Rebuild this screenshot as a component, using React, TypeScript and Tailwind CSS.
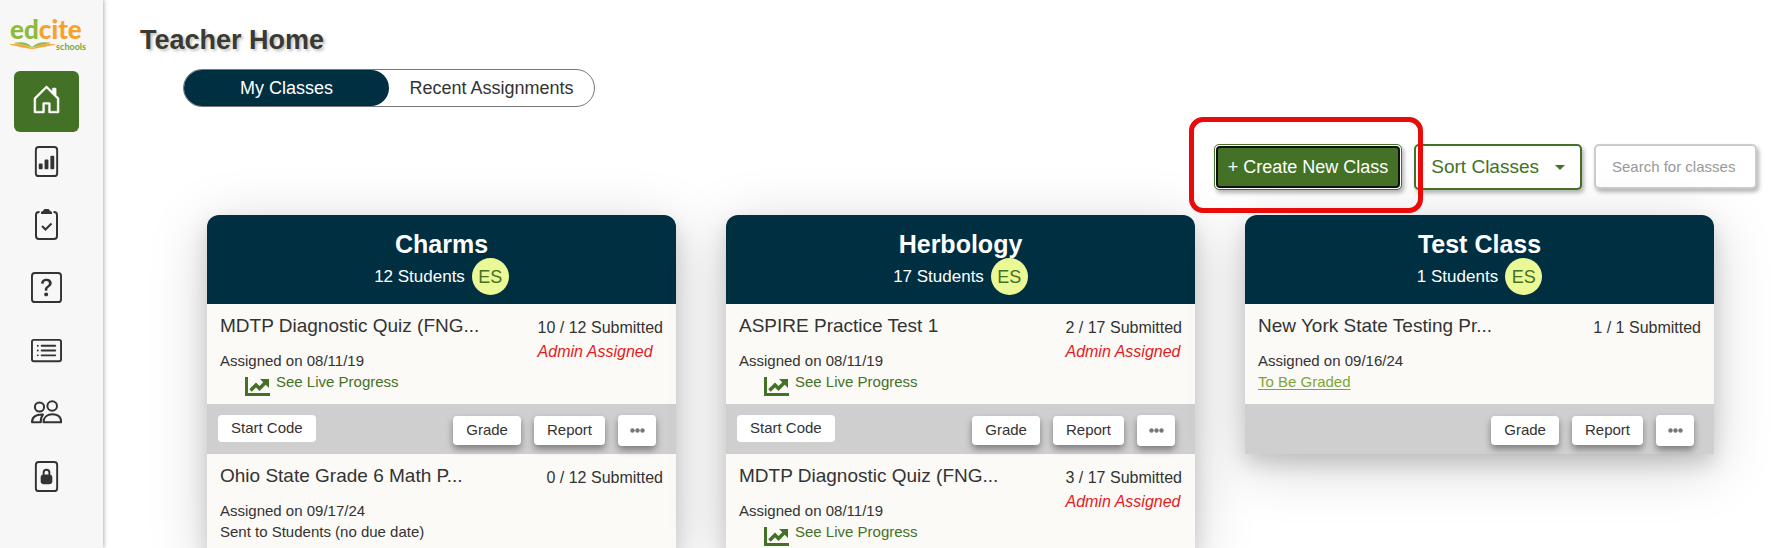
import { useState } from "react";
import { BsCardList, BsFileBarGraph, BsFileLock2, BsHouseDoor, BsQuestionSquare } from "react-icons/bs";

type Assignment = {
  title: string;
  done: number;
  admin?: boolean;
  date: string;
  note: "live" | "sent" | "grade";
  actions?: boolean;
  startCode?: boolean;
};

type ClassInfo = {
  name: string;
  students: number;
  assignments: Assignment[];
};

const CLASSES: ClassInfo[] = [
  {
    name: "Charms",
    students: 12,
    assignments: [
      {
        title: "MDTP Diagnostic Quiz (FNG...",
        done: 10,
        admin: true,
        date: "08/11/19",
        note: "live",
        actions: true,
        startCode: true,
      },
      { title: "Ohio State Grade 6 Math P...", done: 0, date: "09/17/24", note: "sent" },
    ],
  },
  {
    name: "Herbology",
    students: 17,
    assignments: [
      {
        title: "ASPIRE Practice Test 1",
        done: 2,
        admin: true,
        date: "08/11/19",
        note: "live",
        actions: true,
        startCode: true,
      },
      { title: "MDTP Diagnostic Quiz (FNG...", done: 3, admin: true, date: "08/11/19", note: "live" },
    ],
  },
  {
    name: "Test Class",
    students: 1,
    assignments: [{ title: "New York State Testing Pr...", done: 1, date: "09/16/24", note: "grade", actions: true }],
  },
];

function ClipboardIcon({ size }: { size: number }) {
  return (
    <svg viewBox="0 0 31 31" width={size} height={size} fill="none" stroke="currentColor" strokeWidth="2">
      <path d="M8.5 3H8a3 3 0 0 0-3 3v21a3 3 0 0 0 3 3h15a3 3 0 0 0 3-3V6a3 3 0 0 0-3-3h-.5" />
      <path d="m11 17 3.5 3.5 6-6" />
      <path d="M10 5V3.500Q10 2 12 2 12.500 0 14 0h3q1.500 0 2 2 2 0 2 1.500V5z" fill="currentColor" stroke="none" />
    </svg>
  );
}

function PeopleIcon({ size }: { size: number }) {
  return (
    <svg viewBox="0 0 31 31" width={size} height={size} fill="none" stroke="currentColor" strokeWidth="2">
      <circle cx="21.200" cy="8" r="4.800" />
      <circle cx="8.500" cy="9" r="4.600" />
      <path d="M12.500 24.300c0-5 3.500-8 9-8s8.700 3 8.700 8z" strokeLinejoin="round" />
      <path d="M12 16.600C4.500 16.300 1 19 1 24.300h8.800c-.3-3.500.6-5.800 2.200-7.700z" strokeLinejoin="round" />
    </svg>
  );
}

const NAV = [
  { label: "Reports", Icon: BsFileBarGraph },
  { label: "Assignments", Icon: ClipboardIcon },
  { label: "Questions", Icon: BsQuestionSquare },
  { label: "Lists", Icon: BsCardList },
  { label: "Classes", Icon: PeopleIcon },
  { label: "Secure tests", Icon: BsFileLock2 },
];

function Logo() {
  return (
    <a href="#" className="block w-[76px] font-[Lato,sans-serif]">
      <span className="flex text-[26px] leading-[26px] font-black text-[#8dbb3c]">
        ed<span className="text-[#f9a12b]">cite</span>
      </span>
      <span className="flex items-start justify-between">
        <svg viewBox="0 0 45 9" className="h-[9px] w-[45px]">
          <path d="M0 2.500Q14 1 22 7 13 5 0 2.500Z" fill="#f9a12b" stroke="#f9a12b" strokeWidth=".5" />
          <path d="M5 1Q17-1 22 5.500 15 2 5 1Z" fill="#8dbb3c" stroke="#8dbb3c" strokeWidth=".5" />
          <path d="M45 2.500Q31 1 22 7 31 5 45 2.500Z" fill="#f9a12b" stroke="#f9a12b" strokeWidth=".5" />
          <path d="M40 1Q28-1 22 5.500 30 2 40 1Z" fill="#8dbb3c" stroke="#8dbb3c" strokeWidth=".5" />
        </svg>
        <span className="text-[9px] leading-[9px] font-bold text-[#7da53a]">schools</span>
      </span>
    </a>
  );
}

function ChartIcon() {
  return (
    <svg viewBox="0 0 25 19" className="h-[19px] w-[25px] shrink-0" fill="none" stroke="#437126">
      <path d="M1.5 0V17.5H25" strokeWidth="3" />
      <path d="M5.5 13.500 11 8l3.500 3.500L21 5" strokeWidth="3.500" />
      <path d="M15 2h9v9z" fill="#437126" stroke="none" />
    </svg>
  );
}

function AssignmentRow({ item, total }: { item: Assignment; total: number }) {
  return (
    <>
      <div className="flex h-[100px] justify-between bg-[#fbfaf6] px-[13px] pt-2">
        <div>
          <h3 className="text-[19px] leading-7">{item.title}</h3>
          <p className="mt-[10px] text-[15px] leading-[21px]">Assigned on {item.date}</p>
          {item.note === "live" && (
            <a href="#" className="flex gap-[6px] pl-[25px] text-[15px] leading-[21px] text-[#437126]">
              <span className="pt-[6px]">
                <ChartIcon />
              </span>
              See Live Progress
            </a>
          )}
          {item.note === "sent" && <p className="text-[15px] leading-[21px]">Sent to Students (no due date)</p>}
          {item.note === "grade" && (
            <a href="#" className="block text-[15px] leading-[21px] text-[#7da53a] underline underline-offset-2">
              To Be Graded
            </a>
          )}
        </div>
        <div className="pt-1 text-base leading-6">
          <p>
            {item.done} / {total} Submitted
          </p>
          {item.admin && <p className="text-[#e31b23] italic">Admin Assigned</p>}
        </div>
      </div>
      {item.actions && (
        <div className="flex h-[50px] items-start bg-[#cfcfcf] pt-[11px] pr-5 pl-[11px] text-[15px]">
          {item.startCode && <button className="h-[27px] rounded bg-white px-[13px]">Start Code</button>}
          <div className="ml-auto flex items-center gap-[13px]">
            <button className="h-[29px] rounded bg-white px-[13px] shadow-[0_4px_7px_rgba(0,0,0,0.4)]">Grade</button>
            <button className="h-[29px] rounded bg-white px-[13px] shadow-[0_4px_7px_rgba(0,0,0,0.4)]">Report</button>
            <button
              aria-label="More"
              className="flex h-[31px] w-[38px] items-center justify-center rounded bg-white text-[#777] shadow-[0_4px_7px_rgba(0,0,0,0.4)]"
            >
              <svg viewBox="0 0 15 5" className="h-[5px] w-[15px]" fill="currentColor">
                <circle cx="2.500" cy="2.500" r="2.200" />
                <circle cx="7.500" cy="2.500" r="2.200" />
                <circle cx="12.500" cy="2.500" r="2.200" />
              </svg>
            </button>
          </div>
        </div>
      )}
    </>
  );
}

function ClassCard({ info }: { info: ClassInfo }) {
  return (
    <section className="rounded-t-xl shadow-[0_10px_20px_rgba(0,0,0,0.15),0_12px_60px_rgba(0,0,0,0.18)]">
      <header className="flex h-[89px] flex-col items-center rounded-t-xl bg-[#002f42] pt-[15px] text-white">
        <h2 className="text-[25px] leading-7 font-bold">{info.name}</h2>
        <div className="flex items-center gap-[7px] text-[17px]">
          <span>{info.students} Students</span>
          <span className="flex h-[37px] w-[37px] items-center justify-center rounded-full bg-[#eaf995] text-lg text-[#437126]">
            ES
          </span>
        </div>
      </header>
      {info.assignments.map((a) => (
        <AssignmentRow key={a.title} item={a} total={info.students} />
      ))}
    </section>
  );
}

export default function App() {
  const [tab, setTab] = useState<"classes" | "recent">("classes");
  const [search, setSearch] = useState("");

  return (
    <div className="flex h-screen overflow-hidden bg-white font-['Liberation_Sans',Arial,sans-serif] text-[#333]">
      {/* Sidebar */}
      <nav className="z-10 flex w-[103px] shrink-0 flex-col bg-[#f7f7f7] pt-4 shadow-[1px_0_4px_rgba(0,0,0,0.3)]">
        <div className="pl-[10px]">
          <Logo />
        </div>
        <a
          href="#"
          aria-label="Home"
          className="mt-5 ml-[14px] flex h-[61px] w-[65px] items-center justify-center rounded-md bg-[#437126] pb-1 text-white"
        >
          <BsHouseDoor size={31} strokeWidth={0.2} />
        </a>
        <div className="mt-[14px] ml-[31px] flex flex-col items-start gap-8">
          {NAV.map(({ label, Icon }) => (
            <a key={label} href="#" aria-label={label}>
              <Icon size={31} />
            </a>
          ))}
        </div>
      </nav>

      <main className="min-w-0 flex-1">
        <h1 className="pt-[22px] pl-[37px] text-[27px] leading-9 font-bold text-[#3a3a32] [text-shadow:2px_2px_3px_rgba(0,0,0,0.25)]">
          Teacher Home
        </h1>

        {/* Tabs */}
        <div className="mt-[11px] ml-20 flex h-[38px] w-fit rounded-full border border-[#777] text-lg">
          <button
            onClick={() => setTab("classes")}
            className={`w-[205px] rounded-full ${tab === "classes" ? "bg-[#002f42] text-white" : ""}`}
          >
            My Classes
          </button>
          <button
            onClick={() => setTab("recent")}
            className={`w-[205px] rounded-full ${tab === "recent" ? "bg-[#002f42] text-white" : ""}`}
          >
            Recent Assignments
          </button>
        </div>

        {/* Toolbar */}
        <div className="mt-[37px] flex justify-end gap-3 pr-5">
          <div className="relative">
            <button className="h-[46px] rounded-[5px] border border-[#437126] bg-white p-px text-lg text-white shadow-[2px_3px_4px_rgba(0,0,0,0.3)]">
              <span className="flex h-full items-center rounded border-2 border-[#111] bg-[#437126] px-[10px]">
                + Create New Class
              </span>
            </button>
            <span className="pointer-events-none absolute -top-[27px] -right-[21px] -bottom-[23px] -left-[25px] z-10 rounded-[14px] border-5 border-[#ea0a0a]" />
          </div>
          <button className="flex h-[46px] items-center gap-4 rounded-[5px] border-2 border-[#437126] bg-white px-[15px] text-[19px] text-[#437126] shadow-[2px_3px_4px_rgba(0,0,0,0.3)]">
            Sort Classes
            <span className="border-x-5 border-t-5 border-x-transparent border-t-[#437126]" />
          </button>
          <input
            type="text"
            aria-label="Search for classes"
            placeholder="Search for classes"
            value={search}
            onChange={(e) => setSearch(e.target.value)}
            className="h-[45px] w-[163px] rounded-[5px] border-2 border-[#ccc] bg-white px-4 text-[15px] shadow-[2px_3px_4px_rgba(0,0,0,0.3)] placeholder:text-[#999]"
          />
        </div>

        {/* Class cards */}
        <div className="mt-[25px] grid grid-cols-3 items-start gap-[50px] pr-[63px] pl-[104px]">
          {CLASSES.map((c) => (
            <ClassCard key={c.name} info={c} />
          ))}
        </div>
      </main>
    </div>
  );
}
